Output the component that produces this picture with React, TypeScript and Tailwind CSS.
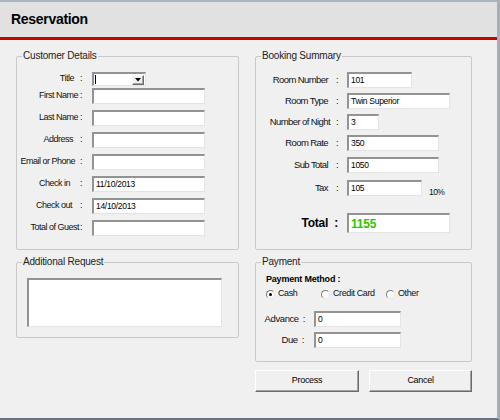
import type { ReactNode } from "react";

const sunken =
  "border-t-2 border-l-2 border-r border-b border-t-[#939393] border-l-[#939393] border-r-[#e4e4e4] border-b-[#e4e4e4] bg-white";

const raised =
  "border border-t-white border-l-white border-r-[#6a6a6a] border-b-[#6a6a6a] shadow-[inset_-1px_-1px_0_#a3a3a3] bg-[#f0f0f0]";

function Box({
  className = "",
  children,
}: {
  className?: string;
  children?: ReactNode;
}) {
  return (
    <div
      className={`${sunken} flex items-center pl-[2px] text-[8.5px] tracking-[-0.3px] text-black ${className}`}
    >
      {children}
    </div>
  );
}

function Group({
  title,
  className = "",
  children,
}: {
  title: string;
  className?: string;
  children?: ReactNode;
}) {
  return (
    <fieldset className={`rounded-[2px] border border-[#c9c9c9] ${className}`}>
      <legend className="ml-[5px] px-[1px] text-[10px] leading-[12px] tracking-[-0.2px] text-[#222]">
        {title}
      </legend>
      {children}
    </fieldset>
  );
}

function Label({
  text,
  gap,
  className,
}: {
  text: string;
  gap: number;
  className: string;
}) {
  return (
    <div className={`flex shrink-0 justify-end ${className}`}>
      <span>{text}</span>
      <span style={{ marginLeft: gap }}>:</span>
    </div>
  );
}

const customerRows = [
  { label: "First Name", gap: 2, value: "" },
  { label: "Last Name", gap: 2, value: "" },
  { label: "Address", gap: 7, value: "" },
  { label: "Email or Phone", gap: 5, value: "" },
  { label: "Check in", gap: 10, value: "11/10/2013" },
  { label: "Check out", gap: 8, value: "14/10/2013" },
  { label: "Total of Guest", gap: 1, value: "" },
];

const bookingRows = [
  { label: "Room Number", gap: 8, value: "101", w: "w-[65px]", mt: "mt-0" },
  { label: "Room Type", gap: 8, value: "Twin Superior", w: "w-[103px]", mt: "mt-[5px]" },
  { label: "Number of Night", gap: 6, value: "3", w: "w-[32px]", mt: "mt-[5px]" },
  { label: "Room Rate", gap: 8, value: "350", w: "w-[92px]", mt: "mt-[5px]" },
  { label: "Sub Total", gap: 8, value: "1050", w: "w-[92px]", mt: "mt-[6px]" },
];

function Radio({ checked, label, className }: { checked?: boolean; label: string; className: string }) {
  return (
    <div className={`flex items-center gap-[3px] ${className}`}>
      <div className="flex h-[9px] w-[9px] items-center justify-center rounded-full border border-t-[#7d7d7d] border-l-[#7d7d7d] border-r-[#e6e6e6] border-b-[#e6e6e6] bg-white">
        {checked && <div className="h-[3px] w-[3px] rounded-full bg-black" />}
      </div>
      <span>{label}</span>
    </div>
  );
}

export default function App() {
  return (
    <div className="h-[420px] w-[500px] overflow-hidden bg-[#f0f0f0] font-['Liberation_Sans',Arial,sans-serif] text-[#111]">
      <div className="flex h-full flex-col border-r-[3px] border-b-[2px] border-r-[#a9afb5] border-b-[#66727e]">
        <div className="h-[2px] bg-[#a9b6c2]" />
        <div className="flex h-[35px] items-center bg-[#e1e1e1] pl-[11px] text-[14px] font-bold tracking-[-0.3px] text-black">
          Reservation
        </div>
        <div className="h-[3px] bg-[#cc0000]" />

        <div className="flex gap-[16px] pl-[16px] pt-[10px]">
          {/* left column */}
          <div className="flex w-[223px] flex-col gap-[6px]">
            <Group title="Customer Details" className="h-[200px]">
              <div className="mt-[10px] flex flex-col text-[9px] tracking-[-0.5px]">
                <div className="flex h-[14px] items-center">
                  <Label text="Title" gap={6} className="w-[68px] pr-[3px]" />
                  <div className={`${sunken} ml-[7px] flex h-[14px] w-[54px] items-center justify-between`}>
                    <div className="ml-[1px] h-[9px] w-px bg-black" />
                    <div className={`${raised} mr-[1px] flex h-[10px] w-[12px] items-center justify-center`}>
                      <svg width="6" height="4" viewBox="0 0 6 4">
                        <path d="M0 0h6L3 3.5z" fill="#000" />
                      </svg>
                    </div>
                  </div>
                </div>
                {customerRows.map((r, i) => (
                  <div
                    key={r.label}
                    className={`flex h-[16px] items-center ${i === 0 ? "mt-[2px]" : "mt-[6px]"}`}
                  >
                    <Label text={r.label} gap={r.gap} className="w-[68px] pr-[3px]" />
                    <Box className="ml-[7px] h-[16px] w-[113px]">{r.value}</Box>
                  </div>
                ))}
              </div>
            </Group>

            <Group title="Additional Request" className="h-[82px]">
              <div className={`${sunken} ml-[10px] mt-[10px] h-[49px] w-[195px]`} />
            </Group>
          </div>

          {/* right column */}
          <div className="flex w-[217px] flex-col">
            <Group title="Booking Summary" className="h-[200px]">
              <div className="mt-[10px] flex flex-col text-[9.5px] tracking-[-0.6px]">
                {bookingRows.map((r) => (
                  <div key={r.label} className={`flex h-[16px] items-center ${r.mt}`}>
                    <Label text={r.label} gap={r.gap} className="w-[84px] pr-[2px]" />
                    <Box className={`ml-[7px] h-[16px] ${r.w}`}>{r.value}</Box>
                  </div>
                ))}
                <div className="mt-[7px] flex h-[16px] items-center">
                  <Label text="Tax" gap={8} className="w-[84px] pr-[2px]" />
                  <Box className="ml-[7px] h-[16px] w-[75px]">105</Box>
                  <span className="ml-[7px] mt-[8px] text-[8.5px]">10%</span>
                </div>
                <div className="mt-[17px] flex h-[20px] items-center">
                  <Label
                    text="Total"
                    gap={6}
                    className="w-[84px] pr-[2px] text-[12px] font-bold tracking-[-0.2px] text-black"
                  />
                  <div
                    className={`${sunken} ml-[7px] flex h-[20px] w-[103px] items-center pl-[2px] text-[12px] font-bold tracking-[-0.2px] text-[#2fc400]`}
                  >
                    1155
                  </div>
                </div>
              </div>
            </Group>

            <Group title="Payment" className="mt-[6px] h-[106px]">
              <div className="flex flex-col pl-[10px] text-[9.5px] tracking-[-0.4px]">
                <div className="mt-[5px] text-[9px] font-bold leading-[12px] tracking-[-0.2px] text-black">
                  Payment Method :
                </div>
                <div className="mt-[3px] flex h-[12px] items-center text-[9px]">
                  <Radio checked label="Cash" className="w-[55px]" />
                  <Radio label="Credit Card" className="w-[65px]" />
                  <Radio label="Other" className="w-[60px]" />
                </div>
                <div className="mt-[11px] flex h-[16px] items-center">
                  <Label text="Advance" gap={4} className="w-[41px] pr-[2px]" />
                  <Box className="ml-[7px] h-[16px] w-[87px]">0</Box>
                </div>
                <div className="mt-[5px] flex h-[16px] items-center">
                  <Label text="Due" gap={4} className="w-[41px] pr-[3px]" />
                  <Box className="ml-[7px] h-[16px] w-[87px]">0</Box>
                </div>
              </div>
            </Group>

            <div className="mt-[8px] flex gap-[10px] text-[9px] tracking-[-0.3px]">
              <button className={`${raised} h-[22px] w-[104px] text-black`}>Process</button>
              <button className={`${raised} h-[22px] w-[103px] text-black`}>Cancel</button>
            </div>
          </div>
        </div>
      </div>
    </div>
  );
}
